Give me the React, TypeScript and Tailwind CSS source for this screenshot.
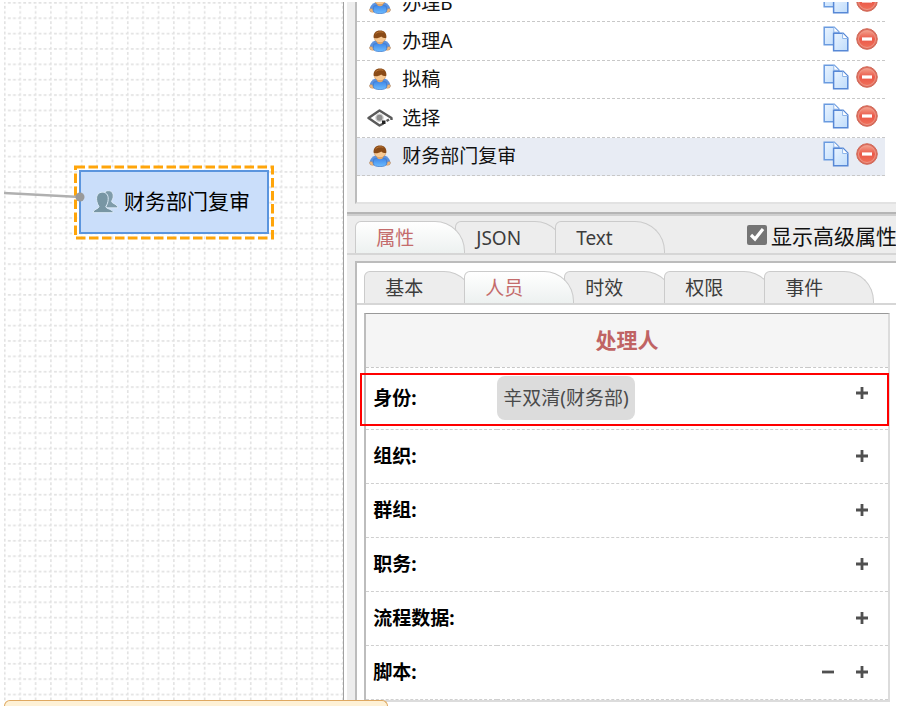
import { useState } from "react";
import clsx from "clsx";

type ActivityType = "user" | "choice";

interface Activity {
  id: string;
  name: string;
  type: ActivityType;
}

interface PersonProperty {
  label: string;
  values?: string[];
  removable?: boolean;
  highlighted?: boolean;
}

const activities: Activity[] = [
  { id: "b", name: "办理B", type: "user" },
  { id: "a", name: "办理A", type: "user" },
  { id: "draft", name: "拟稿", type: "user" },
  { id: "choice", name: "选择", type: "choice" },
  { id: "finance", name: "财务部门复审", type: "user" },
];

const personProperties: PersonProperty[] = [
  { label: "身份:", values: ["辛双清(财务部)"], highlighted: true },
  { label: "组织:" },
  { label: "群组:" },
  { label: "职务:" },
  { label: "流程数据:" },
  { label: "脚本:", removable: true },
];

function UserIcon() {
  return (
    <svg viewBox="0 0 22 22" className="size-[22px] shrink-0" aria-hidden="true">
      <defs>
        <linearGradient id="user-shirt" x1="0" y1="0" x2="0" y2="1">
          <stop offset="0" stopColor="#3f86e8" />
          <stop offset="1" stopColor="#6cbcff" />
        </linearGradient>
      </defs>
      <path d="M6.500 10.500C3 11.500.9 14.200.6 18c0 1.300 1 2 2.400 2h16c1.400 0 2.400-.7 2.400-2-.3-3.800-2.400-6.500-5.900-7.500z" fill="#5b92e0" />
      <path d="M.6 17c2-1 3.900 0 4.300 3.200-2.900.3-4.500-.3-4.300-3.200zM21.400 17c-2-1-3.900 0-4.300 3.200 2.900.3 4.500-.3 4.300-3.200z" fill="#f0b87c" stroke="#c58c58" strokeWidth="0.500" />
      <path d="M4.800 14c3.500-1 8.900-1 12.400 0l.6 4.800c-.6 1.900-2.900 2.800-6.800 2.800s-6.200-.9-6.800-2.800z" fill="url(#user-shirt)" stroke="#3f78cc" strokeWidth="0.700" />
      <path d="M8 10h6v2.200c0 1.200-1.300 2-3 2s-3-.8-3-2z" fill="#e9ac70" />
      <path d="M5.200 5.500h11.600c.4 4.200-1.800 7.300-5.800 7.300s-6.200-3.100-5.800-7.300z" fill="#f8c993" stroke="#b9793f" strokeWidth="0.500" />
      <path d="M4.800 8C4 3 6.800.5 11 .5S18 3 17.200 8c-1.900.2-3.700-.4-5-1.600C10.500 7.800 7.600 8.500 4.800 8z" fill="#8a4b17" />
      <path d="M6.500 4C8 1.900 11.500 1.300 14.300 2.300" stroke="#b87436" fill="none" />
    </svg>
  );
}

function ChoiceIcon() {
  return (
    <svg viewBox="0 0 26 22" className="h-[22px] w-[26px] shrink-0" aria-hidden="true">
      <path
        d="M24.500 13v-2L12.500 3.500 1.500 11l11 7.500 4-2"
        fill="none"
        stroke="#5a5a5a"
        strokeWidth="2.400"
        strokeLinejoin="round"
      />
      <circle cx="12.500" cy="10.800" r="4.300" fill="#d0d0d0" />
      <circle cx="12.500" cy="10.800" r="3" fill="#8d8d8d" />
      <path d="M15 13.500h3.500V17H15z" fill="#222" />
      <path d="M19.500 14l2.500-1.500" stroke="#5a5a5a" strokeWidth="2.400" />
    </svg>
  );
}

function CopyIcon() {
  return (
    <svg viewBox="0 0 26 26" className="size-[26px]" aria-hidden="true">
      <defs>
        <linearGradient id="copy-sheet" x1="0" y1="0" x2="1" y2="1">
          <stop offset="0" stopColor="#eaf4ff" />
          <stop offset="1" stopColor="#bfdcfb" />
        </linearGradient>
      </defs>
      <path d="M1.200 1.200h10l4.600 4.600v13H1.200z" fill="url(#copy-sheet)" stroke="#6a9be0" strokeWidth="1.500" />
      <path d="M10.800 1.200v5h5" fill="#fff" stroke="#8fb6ea" />
      <path d="M10.600 7.200h9.500l4.700 4.800v12.800H10.600z" fill="url(#copy-sheet)" stroke="#5788d6" strokeWidth="1.500" />
      <path d="M19.600 7.500v5h5" fill="#fff" stroke="#8fb6ea" />
    </svg>
  );
}

function RemoveIcon() {
  return (
    <svg viewBox="0 0 22 22" className="size-[22px]" aria-hidden="true">
      <defs>
        <linearGradient id="remove-fill" x1="0" y1="0" x2="0" y2="1">
          <stop offset="0" stopColor="#f3a08c" />
          <stop offset="0.500" stopColor="#ea5747" />
          <stop offset="1" stopColor="#f0705a" />
        </linearGradient>
      </defs>
      <circle cx="11" cy="11" r="10.300" fill="#dd6a5b" stroke="#cf6a58" />
      <circle cx="11" cy="11" r="8.500" fill="url(#remove-fill)" stroke="#f0a191" strokeWidth="0.800" />
      <rect x="6" y="9.400" width="10" height="3.200" fill="#fff" />
    </svg>
  );
}

function PeopleIcon() {
  return (
    <svg viewBox="0 0 26 24" className="h-6 w-[26px] shrink-0" aria-hidden="true">
      <path
        d="M13 1.800C16.500-.6 21.300.8 21.200 6c0 2.300-1 4-1.700 5.200.2 2.300 4.700 2.600 6 5.300v1.300H14z"
        fill="#7f9caa"
        stroke="#e3effa"
        strokeWidth="0.800"
      />
      <path
        d="M1 22.700c.2-3.800 5.600-3.400 6-6.200C5.500 14.300 4.800 12 4.600 9.500 4.300 4.700 6.800 2.200 10.400 2.200s6.100 2.500 5.800 7.300c-.2 2.500-.8 4.800-2.400 7 .4 2.800 7.300 2.500 7.500 6.200z"
        fill="#7896a4"
        stroke="#dcebf8"
      />
    </svg>
  );
}

function PlusIcon() {
  return (
    <svg viewBox="0 0 12 12" className="size-3" aria-hidden="true">
      <path d="M6 0v12M0 6h12" stroke="#505050" strokeWidth="2.800" />
    </svg>
  );
}

function MinusIcon() {
  return (
    <svg viewBox="0 0 12 12" className="size-3" aria-hidden="true">
      <path d="M0 6h12" stroke="#505050" strokeWidth="2.800" />
    </svg>
  );
}

function FlowCanvas() {
  return (
    <section
      aria-label="流程图"
      className="relative min-w-0 flex-[340_1_0%] overflow-hidden border-r border-[#a0a0a0] bg-white"
    >
      <svg className="absolute inset-0 size-full" aria-hidden="true">
        <defs>
          <pattern id="grid" width="15.370" height="15.370" patternUnits="userSpaceOnUse">
            <path
              d="M0.800 0V15.370M0 0.800H15.370"
              fill="none"
              stroke="#e2e2e2"
              strokeWidth="1.600"
              strokeDasharray="2.800 2.323"
              strokeDashoffset="1.200"
            />
          </pattern>
        </defs>
        <rect width="100%" height="100%" fill="url(#grid)" />
      </svg>

      {/* Selected activity */}
      <div className="absolute top-[168px] left-[75px] flex h-16 w-[190px] items-center gap-1.5 border-2 border-[#5b95de] bg-[#cadefa] pl-[11px] text-[21px] whitespace-nowrap text-black">
        <PeopleIcon />
        <span>财务部门复审</span>
      </div>

      <svg className="absolute inset-0 size-full" aria-hidden="true">
        <rect
          x="71.500"
          y="165"
          width="197"
          height="71"
          fill="none"
          stroke="#ffa50a"
          strokeWidth="3"
          strokeDasharray="9.500 3.500"
        />
        <path d="M0 191L76 195" stroke="#b0b0b0" strokeWidth="2.500" />
        <circle cx="76" cy="195" r="4.500" fill="#999" />
      </svg>
    </section>
  );
}

function ActivityList() {
  return (
    <div className="h-[202px] shrink-0 overflow-hidden border-b-2 border-l-2 border-b-[#e2e2e2] border-l-[#bcbcbc] bg-white pr-[11px]">
      <ul className="-mt-[18px] grid h-48 grid-rows-5">
        {activities.map((activity) => (
          <li
            key={activity.id}
            className={clsx(
              "flex items-center border-b border-dashed border-[#c8c8c8] pr-[7px]",
              activity.id === "finance" && "bg-[#e8ecf4]"
            )}
          >
            <span className="flex w-[45px] shrink-0 justify-center">
              {activity.type === "user" ? <UserIcon /> : <ChoiceIcon />}
            </span>
            <span className="min-w-0 flex-1 truncate text-[19px] leading-7 text-[#111]">
              {activity.name}
            </span>
            <span className="flex items-center gap-[7px] pb-1">
              <button type="button" aria-label={`复制${activity.name}`}>
                <CopyIcon />
              </button>
              <button type="button" aria-label={`删除${activity.name}`}>
                <RemoveIcon />
              </button>
            </span>
          </li>
        ))}
      </ul>
    </div>
  );
}

interface TabsProps {
  tabs: string[];
  active: string;
  onChange: (tab: string) => void;
}

function Tabs({ tabs, active, onChange }: TabsProps) {
  return (
    <div role="tablist" className="flex">
      {tabs.map((tab) => (
        <button
          key={tab}
          type="button"
          role="tab"
          aria-selected={tab === active}
          onClick={() => onChange(tab)}
          className={clsx(
            "-mr-2.5 h-8 w-[110px] shrink-0 rounded-tl-md rounded-tr-[30px] border border-b-0 border-[#cbcbcb] pl-5 text-left text-[19px] leading-8",
            tab === active
              ? "relative z-10 bg-linear-to-b from-white to-[#edf1f0] text-[#c46c6c]"
              : "relative bg-[#ededed] text-[#3c3c3c]"
          )}
        >
          {tab}
        </button>
      ))}
    </div>
  );
}

function PersonTable() {
  return (
    <table className="w-full border-collapse text-[19px]">
      <thead>
        <tr className="h-[53px] border-b border-dashed border-[#c8c8c8] bg-[#f5f5f5]">
          <th colSpan={3} className="p-0 text-[21px] font-bold text-[#c06464]">
            处理人
          </th>
        </tr>
      </thead>
      <tbody>
        {personProperties.map((property) => (
          <tr
            key={property.label}
            className={clsx(
              "relative border-b border-dashed border-[#cfcfcf]",
              property.highlighted ? "h-[62px]" : "h-[54px]"
            )}
          >
            <th scope="row" className="w-[131px] p-0 pl-[7px] text-left font-bold text-black">
              {property.label}
            </th>
            <td className="p-0">
              {property.values?.map((value) => (
                <span
                  key={value}
                  className="inline-flex h-11 items-center rounded-lg bg-[#dcdcdc] px-1.5 align-middle whitespace-nowrap text-[#4a4a4a]"
                >
                  {value}
                </span>
              ))}
            </td>
            <td className="w-20 p-0 pr-5">
              <div className={clsx("flex justify-end gap-[22px]", property.highlighted && "pb-2.5")}>
                {property.removable && (
                  <button type="button" aria-label={`移除${property.label}`}>
                    <MinusIcon />
                  </button>
                )}
                <button type="button" aria-label={`添加${property.label}`}>
                  <PlusIcon />
                </button>
              </div>
              {property.highlighted && (
                <div className="pointer-events-none absolute top-1.5 -right-px bottom-0.5 -left-1.5 border-2 border-[#f00]" />
              )}
            </td>
          </tr>
        ))}
      </tbody>
    </table>
  );
}

export default function App() {
  const [viewTab, setViewTab] = useState("属性");
  const [propertyTab, setPropertyTab] = useState("人员");
  const [advanced, setAdvanced] = useState(true);

  return (
    <div className="relative h-screen overflow-hidden bg-white pt-0.5 pr-3.5 pb-1 pl-1 font-['Noto_Sans','Noto_Sans_CJK_SC',sans-serif]">
      <main className="flex h-full gap-[3px]">
        <FlowCanvas />

        <section className="flex min-w-0 flex-[550_1_0%] flex-col overflow-hidden bg-[#ededed]">
          <div className="pl-2">
            <ActivityList />
          </div>

          {/* Splitter */}
          <div className="mt-2 h-1 shrink-0 border-t-2 border-[#b5b5b5] bg-[#cfcfcf]" />

          <div className="flex h-[39px] shrink-0 items-end justify-between border-b-2 border-[#d6d6d6] pl-2">
            <Tabs tabs={["属性", "JSON", "Text"]} active={viewTab} onChange={setViewTab} />
            <label className="flex h-9 w-[149px] items-center gap-1 overflow-hidden text-[21px] whitespace-nowrap text-[#111]">
              <input
                type="checkbox"
                checked={advanced}
                onChange={(e) => setAdvanced(e.target.checked)}
                className="size-5 shrink-0 accent-[#757575]"
              />
              <span className="pt-1">显示高级属性</span>
            </label>
          </div>

          <div className="mt-1.5 ml-2 min-h-0 flex-1 overflow-hidden border-t-2 border-l-2 border-[#bcbcbc] bg-white">
            <div className="border-b-2 border-[#d6d6d6] pt-2 pl-[7px]">
              <Tabs
                tabs={["基本", "人员", "时效", "权限", "事件"]}
                active={propertyTab}
                onChange={setPropertyTab}
              />
            </div>
            <div className="mt-2 mr-1.5 ml-[7px] border-2 border-t border-t-[#999] border-r-[#dcdcdc] border-b-[#dcdcdc] border-l-[#bdbdbd]">
              <PersonTable />
            </div>
          </div>
        </section>
      </main>

      {/* Top edge of the message bar */}
      <div className="absolute bottom-0 left-1 h-1.5 w-96 rounded-t-[10px] border border-b-0 border-[#dfa860] bg-[#fef1d6]" />
    </div>
  );
}
